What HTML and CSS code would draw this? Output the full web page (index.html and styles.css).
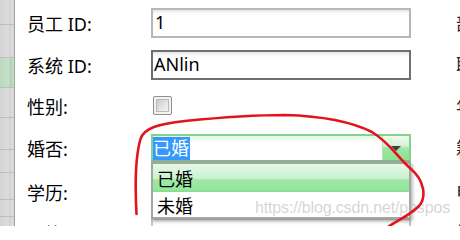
FILE: index.html
```html
<!DOCTYPE html>
<html lang="zh-CN">
<head>
<meta charset="utf-8">
<title>员工信息</title>
<link rel="stylesheet" href="styles.css">
</head>
<body>
<div class="window">
  <div class="strip">
    <div class="cell h25"></div>
    <div class="cell h33"></div>
    <div class="cell h30 green"></div>
    <div class="cell h30"></div>
    <div class="cell h32"></div>
    <div class="cell h23"></div>
    <div class="cell h27"></div>
    <div class="cell h17"></div>
    <div class="cell h30"></div>
  </div>
  <div class="form">
    <div class="label">员工 ID:</div>
    <div class="ctl"><div class="textbox">1</div></div>
    <div class="rlabel">部门:</div>

    <div class="label">系统 ID:</div>
    <div class="ctl"><div class="textbox focus">ANlin</div></div>
    <div class="rlabel">职位:</div>

    <div class="label">性别:</div>
    <div class="ctl"><div class="checkbox"><div class="check-inner"></div></div></div>
    <div class="rlabel">年龄:</div>

    <div class="label">婚否:</div>
    <div class="ctl">
      <div class="combo">
        <div class="combo-text"><span class="sel">已婚</span></div>
        <div class="combo-btn"><span class="tri"></span></div>
        <div class="list">
          <div class="item hl">已婚</div>
          <div class="item short">未婚</div>
        </div>
      </div>
    </div>
    <div class="rlabel">籍贯:</div>

    <div class="label">学历:</div>
    <div class="ctl"></div>
    <div class="rlabel">电话:</div>

    <div class="label">民族:</div>
    <div class="ctl"><div class="textbox plain"></div></div>
    <div class="rlabel">地址:</div>
  </div>
  <div class="watermark">https://blog.csdn.net/pospos</div>
  <svg class="mark" viewBox="0 0 460 226" width="460" height="226">
    <path d="M136.5,214 C135,186 135.5,156 140.5,139 C144,128 158,124 185,121 C215,118 250,115 285,115 C320,116 352,122 372,132 C390,143 398,158 411,169 C424,180 427,197 419,206 C409,216 396,221 385,229" fill="none" stroke="#e3131c" stroke-width="2.6" stroke-linecap="round"/>
  </svg>
</div>
</body>
</html>
```

FILE: styles.css
```css
html, body {
  margin: 0;
  padding: 0;
  background: #fff;
}
.window {
  position: relative;
  width: 460px;
  height: 226px;
  overflow: hidden;
  display: flex;
  background: #fff;
  font-family: "Noto Sans", "Noto Sans CJK SC", sans-serif;
  color: #000;
}
.strip {
  flex: 0 0 14px;
  display: flex;
  flex-direction: column;
  border-right: 1px solid #a2a2a2;
  background: linear-gradient(to right, #d3d3d3 0, #dcdcdc 9px, #c9c9c9 10px, #dedede 11px, #d6d6d6 14px);
}
.cell {
  flex: none;
  border-bottom: 1px solid #bdbdbd;
  box-sizing: border-box;
}
.cell.green {
  background: linear-gradient(to right, #b9d8be, #c6e2ca 9px, #b0cfb5 10px, #c4e0c8);
}
.h25 { height: 25px; }
.h33 { height: 33px; }
.h30 { height: 30px; }
.h32 { height: 32px; }
.h23 { height: 23px; }
.h27 { height: 27px; }
.h17 { height: 17px; }

.form {
  flex: 1;
  padding-left: 12px;
  display: grid;
  grid-template-columns: 124px 305px 40px;
  grid-template-rows: 45px 40px 41px 44px 43px 40px;
  align-items: center;
}
.label {
  font-size: 18px;
  line-height: 22px;
  white-space: nowrap;
  padding-top: 2px;
}
.rlabel {
  font-size: 18px;
  line-height: 22px;
  white-space: nowrap;
  color: #222;
}
.ctl {
  width: 260px;
  position: relative;
}
.textbox {
  box-sizing: border-box;
  height: 30px;
  border: 2px solid #b7b7b7;
  background: linear-gradient(#e6e6e6, #f8f8f8 3px, #fff 6px);
  font-size: 18px;
  line-height: 24px;
  padding-left: 2px;
}
.textbox.focus {
  border-color: #6f6f6f;
  padding-left: 1px;
}
.textbox.plain {
  border-color: #c4c4c4;
}
.checkbox {
  box-sizing: border-box;
  width: 19px;
  height: 19px;
  margin-left: 2px;
  border: 1px solid #8e8e8e;
  border-radius: 2px;
  background: #f3f3f3;
  display: flex;
  align-items: center;
  justify-content: center;
}
.check-inner {
  box-sizing: border-box;
  width: 13px;
  height: 13px;
  border: 1px solid #b9b9b9;
  background: linear-gradient(135deg, #c9c9c9, #e6e6e6 60%, #f4f4f4);
}
.combo {
  position: relative;
  box-sizing: border-box;
  height: 28px;
  border: 2px solid #84d38d;
  border-bottom-color: #86b78b;
  display: flex;
  background: linear-gradient(#e3f6e5, #fbfffb 6px, #fff 10px);
}
.combo-text {
  flex: 1;
  display: flex;
  align-items: center;
}
.sel {
  background: #3399ff;
  color: #fff;
  font-size: 18px;
  line-height: 23px;
  padding: 0 1px 0 0;
}
.combo-btn {
  box-sizing: border-box;
  width: 27px;
  border-left: 1px solid #b4e6b8;
  background: linear-gradient(#effbef, #d3f3d5 40%, #9fe5a4 52%, #8ce292);
  display: flex;
  justify-content: center;
  padding-top: 10px;
}
.tri {
  width: 0;
  height: 0;
  border-left: 5px solid transparent;
  border-right: 5px solid transparent;
  border-top: 5px solid #3f3f3f;
}
.list {
  position: absolute;
  top: calc(100% + 2px);
  left: -2px;
  width: 260px;
  box-sizing: border-box;
  border: 2px solid #a4a4a4;
  background: #fff;
  box-shadow: 2px 2px 3px rgba(0, 0, 0, 0.25);
  z-index: 2;
}
.item {
  height: 28px;
  display: flex;
  align-items: center;
  padding-left: 4px;
  font-size: 18px;
}
.item.hl {
  background: linear-gradient(#e4f8e6, #cdf2d1 50%, #9ce8a4 58%, #95e59d 92%, #86d98e);
}
.item.short {
  height: 25px;
}
.watermark {
  position: absolute;
  left: 255px;
  top: 200px;
  font-family: "Liberation Sans", Arial, sans-serif;
  font-size: 16px;
  line-height: 16px;
  letter-spacing: -0.15px;
  color: rgba(185, 185, 185, 0.6);
  z-index: 3;
  white-space: nowrap;
}
.mark {
  position: absolute;
  left: 0;
  top: 0;
  z-index: 4;
  pointer-events: none;
}
```
